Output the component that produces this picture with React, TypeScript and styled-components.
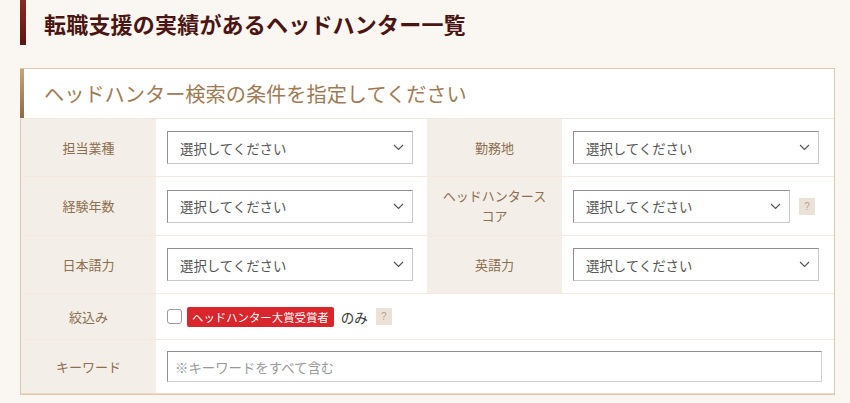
import React from "react";
import styled, { createGlobalStyle } from "styled-components";

const Global = createGlobalStyle`
  html, body { margin: 0; padding: 0; background: #faf6f1; }
  body { font-family: "Noto Sans CJK JP", "Noto Sans", sans-serif; }
  * { box-sizing: border-box; }
`;

const Page = styled.div`
  width: 850px;
  height: 403px;
  overflow: hidden;
  padding-left: 20px;
`;

const Heading = styled.h1`
  margin: 0;
  height: 45px;
  display: flex;
  align-items: center;
  padding-left: 24px;
  background: linear-gradient(#8a2a25, #5e1512) left / 6px 100% no-repeat;
  font-size: 22px;
  font-weight: 700;
  color: #4a1512;
  letter-spacing: 0.2px;
`;

const Panel = styled.section`
  margin-top: 23px;
  width: 815px;
  border: 1px solid #dcc8ae;
  background: #fff;
`;

const PanelHead = styled.div`
  height: 50px;
  display: flex;
  align-items: center;
  padding-left: 24px;
  margin-left: -1px;
  background: linear-gradient(#c8a478, #8e6a42) left / 4px 100% no-repeat, #fff;
  font-size: 20.2px;
  color: #9e7b55;
  border-bottom: 1px solid #f1e7dc;
`;

const Row = styled.div<{ $h: number; $full?: boolean }>`
  display: grid;
  grid-template-columns: ${(p) => (p.$full ? "135px 1fr" : "135px 271px 135px 1fr")};
  height: ${(p) => p.$h}px;
  border-bottom: 1px solid #f3e9df;
  &:last-child { border-bottom: 1px solid #ecd9c6; }
`;

const Label = styled.div`
  background: #f4eee8;
  display: flex;
  align-items: center;
  justify-content: center;
  text-align: center;
  font-size: 13px;
  line-height: 20px;
  color: #8d6f50;
  padding: 0 6px;
`;

const Cell = styled.div`
  display: flex;
  align-items: center;
  padding-left: 11px;
  gap: 9px;
`;

const SelectBox = styled.div<{ $w: number }>`
  width: ${(p) => p.$w}px;
  height: 33px;
  border: 1px solid #c9c9c9;
  border-top-color: #8f8f8f;
  border-left-color: #8f8f8f;
  display: flex;
  align-items: center;
  justify-content: space-between;
  padding: 0 8px 0 12px;
  font-size: 13.4px;
  color: #555;
  background: #fff;
`;

const Chevron = () => (
  <svg width="11" height="7" viewBox="0 0 11 7">
    <polyline points="1,1 5.5,5.5 10,1" fill="none" stroke="#555" strokeWidth="1.2" />
  </svg>
);

const Help = styled.span`
  width: 16px;
  height: 17px;
  background: #ebe1d7;
  color: #b3a493;
  font-size: 10px;
  display: inline-flex;
  align-items: center;
  justify-content: center;
  border-radius: 1px;
  font-family: "Liberation Sans", sans-serif;
`;

const FilterCell = styled.div`
  display: flex;
  align-items: center;
  padding-left: 11px;
`;

const Check = styled.span`
  width: 15px;
  height: 15px;
  border: 1px solid #9a9a9a;
  border-radius: 3px;
  background: #fff;
  margin-right: 5px;
`;

const Badge = styled.span`
  height: 20px;
  padding: 0 5px;
  background: #d9262c;
  color: #fff;
  font-size: 11.4px;
  display: inline-flex;
  align-items: center;
  border-radius: 2px;
  margin-right: 7px;
`;

const Only = styled.span`
  font-size: 13.5px;
  color: #333;
  margin-right: 8px;
`;

const Keyword = styled.div`
  width: 655px;
  height: 31px;
  border: 1px solid #d0d0d0;
  border-top-color: #8f8f8f;
  border-left-color: #8f8f8f;
  display: flex;
  align-items: center;
  padding-left: 7px;
  font-size: 13.4px;
  color: #999;
`;

const Select = ({ w }: { w: number }) => (
  <SelectBox $w={w}>
    <span>選択してください</span>
    <Chevron />
  </SelectBox>
);

export default function App() {
  return (
    <Page>
      <Global />
      <Heading>転職支援の実績があるヘッドハンター一覧</Heading>
      <Panel>
        <PanelHead>ヘッドハンター検索の条件を指定してください</PanelHead>
        <Row $h={58}>
          <Label>担当業種</Label>
          <Cell><Select w={246} /></Cell>
          <Label>勤務地</Label>
          <Cell><Select w={246} /></Cell>
        </Row>
        <Row $h={59}>
          <Label>経験年数</Label>
          <Cell><Select w={246} /></Cell>
          <Label>ヘッドハンタース<br />コア</Label>
          <Cell><Select w={217} /><Help>?</Help></Cell>
        </Row>
        <Row $h={58}>
          <Label>日本語力</Label>
          <Cell><Select w={246} /></Cell>
          <Label>英語力</Label>
          <Cell><Select w={246} /></Cell>
        </Row>
        <Row $h={46} $full>
          <Label>絞込み</Label>
          <FilterCell>
            <Check />
            <Badge>ヘッドハンター大賞受賞者</Badge>
            <Only>のみ</Only>
            <Help>?</Help>
          </FilterCell>
        </Row>
        <Row $h={54} $full>
          <Label>キーワード</Label>
          <Cell><Keyword>※キーワードをすべて含む</Keyword></Cell>
        </Row>
      </Panel>
    </Page>
  );
}
